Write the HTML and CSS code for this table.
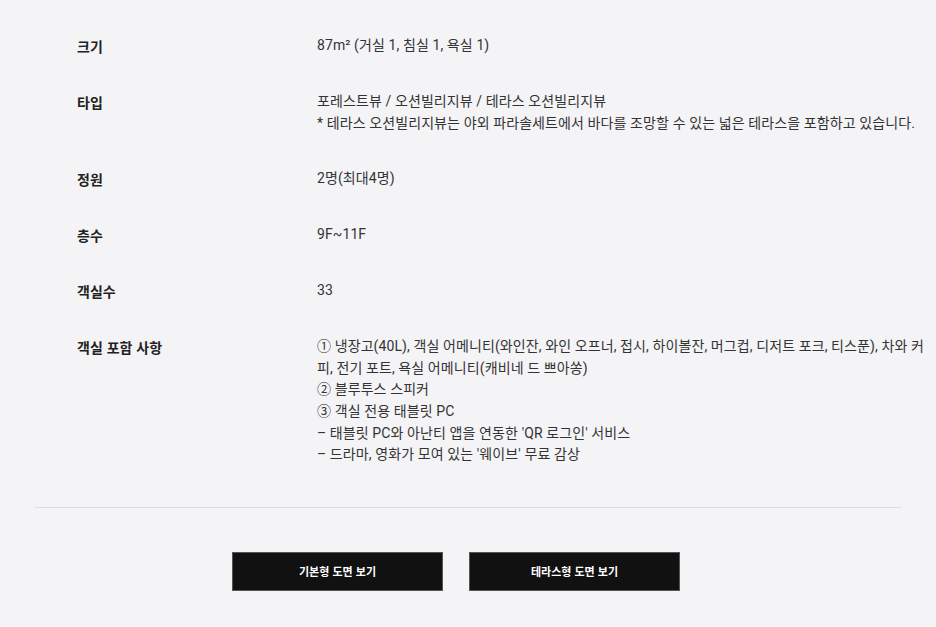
FILE: index.html
```html
<!DOCTYPE html>
<html lang="ko">
<head>
  <meta charset="UTF-8" />
  <meta name="viewport" content="width=device-width, initial-scale=1.0" />
  <title>객실 정보</title>
  <link rel="stylesheet" href="styles.css">
</head>
<body>

  <section class="room-info">
    <dl class="info-list">
      <div class="info-row">
        <dt>크기</dt>
        <dd>87m² (거실 1, 침실 1, 욕실 1)</dd>
      </div>
      <div class="info-row">
        <dt>타입</dt>
        <dd>포레스트뷰 / 오션빌리지뷰 / 테라스 오션빌리지뷰<br>* 테라스 오션빌리지뷰는 야외 파라솔세트에서 바다를 조망할 수 있는 넓은 테라스을 포함하고 있습니다.</dd>
      </div>
      <div class="info-row">
        <dt>정원</dt>
        <dd>2명(최대4명)</dd>
      </div>
      <div class="info-row">
        <dt>층수</dt>
        <dd>9F~11F</dd>
      </div>
      <div class="info-row">
        <dt>객실수</dt>
        <dd>33</dd>
      </div>
      <div class="info-row">
        <dt>객실 포함 사항</dt>
        <dd>① 냉장고(40L), 객실 어메니티(와인잔, 와인 오프너, 접시, 하이볼잔, 머그컵, 디저트 포크, 티스푼), 차와 커피, 전기 포트, 욕실 어메니티(캐비네 드 쁘아쏭)<br>② 블루투스 스피커<br>③ 객실 전용 태블릿 PC<br>– 태블릿 PC와 아난티 앱을 연동한 'QR 로그인' 서비스<br>– 드라마, 영화가 모여 있는 '웨이브' 무료 감상</dd>
      </div>
    </dl>

    <div class="plan-buttons">
      <button type="button">기본형 도면 보기</button>
      <button type="button">테라스형 도면 보기</button>
    </div>
  </section>

</body>
</html>
```

FILE: styles.css
```css
* {
  margin: 0;
  padding: 0;
  box-sizing: border-box;
}
body {
  font-family: "Noto Sans CJK KR", "Noto Sans", sans-serif;
  background: #f4f4f6;
  color: #333;
  overflow: hidden;
}
.room-info {
  margin: 0 35px;
  padding-top: 35px;
}
.info-list {
  padding-bottom: 7px;
  border-bottom: 1px solid #dcdcdf;
}
.info-row {
  display: grid;
  grid-template-columns: 240px 616px;
  padding-left: 42px;
  margin-bottom: 34px;
  line-height: 22px;
}
.info-row dt {
  font-size: 14px;
  font-weight: 700;
  color: #222;
}
.info-row dd {
  font-family: Roboto, "Noto Sans CJK KR", sans-serif;
  font-size: 14px;
  line-height: 21.6px;
  letter-spacing: 0.1px;
  word-break: break-all;
  color: #333;
}
.plan-buttons {
  display: flex;
  justify-content: center;
  gap: 26px;
  padding: 44px 24px 0 0;
}
.plan-buttons button {
  width: 211px;
  height: 39px;
  background: #111;
  color: #fff;
  border: 1px solid #555;
  font-family: inherit;
  font-size: 11px;
  font-weight: 700;
  cursor: pointer;
}
```
